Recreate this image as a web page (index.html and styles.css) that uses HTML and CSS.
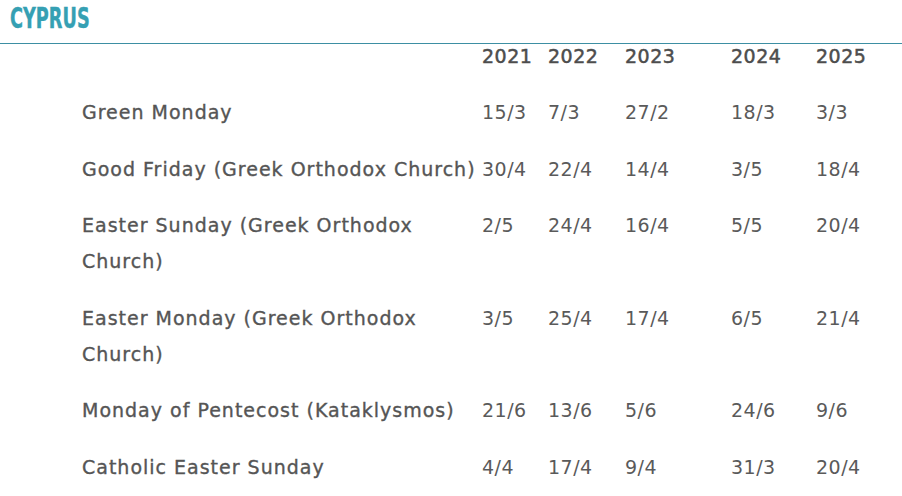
FILE: index.html
```html
<!DOCTYPE html>
<html lang="en">
<head>
<meta charset="utf-8">
<title>Cyprus</title>
<link rel="stylesheet" href="styles.css">
</head>
<body>
<header class="top">
  <h1 class="title">CYPRUS</h1>
</header>
<table class="dates">
  <colgroup>
    <col class="c-label">
    <col class="c-y1">
    <col class="c-y2">
    <col class="c-y3">
    <col class="c-y4">
    <col class="c-y5">
  </colgroup>
  <thead>
    <tr>
      <th></th><th>2021</th><th>2022</th><th>2023</th><th>2024</th><th>2025</th>
    </tr>
  </thead>
  <tbody>
    <tr><td class="lbl">Green Monday</td><td>15/3</td><td>7/3</td><td>27/2</td><td>18/3</td><td>3/3</td></tr>
    <tr><td class="lbl">Good Friday (Greek Orthodox Church)</td><td>30/4</td><td>22/4</td><td>14/4</td><td>3/5</td><td>18/4</td></tr>
    <tr><td class="lbl">Easter Sunday (Greek Orthodox Church)</td><td>2/5</td><td>24/4</td><td>16/4</td><td>5/5</td><td>20/4</td></tr>
    <tr><td class="lbl">Easter Monday (Greek Orthodox Church)</td><td>3/5</td><td>25/4</td><td>17/4</td><td>6/5</td><td>21/4</td></tr>
    <tr><td class="lbl">Monday of Pentecost (Kataklysmos)</td><td>21/6</td><td>13/6</td><td>5/6</td><td>24/6</td><td>9/6</td></tr>
    <tr><td class="lbl">Catholic Easter Sunday</td><td>4/4</td><td>17/4</td><td>9/4</td><td>31/3</td><td>20/4</td></tr>
  </tbody>
</table>
</body>
</html>
```

FILE: styles.css
```css
html, body {
  margin: 0;
  padding: 0;
  background: #fff;
}
body {
  font-family: "DejaVu Sans", sans-serif;
  color: #555;
  width: 902px;
  overflow: hidden;
}
.top {
  height: 44px;
  border-bottom: 1px solid #3d8fa3;
  box-sizing: border-box;
  padding-left: 10px;
}
.title {
  margin: 0;
  font-family: "DejaVu Sans Condensed", sans-serif;
  font-weight: bold;
  font-size: 29px;
  line-height: 36px;
  color: #35a0b3;
  display: inline-block;
  transform: scaleX(0.68);
  transform-origin: left center;
  -webkit-text-stroke: 0.4px #35a0b3;
}
.dates {
  border-collapse: collapse;
  table-layout: fixed;
  margin-left: 82px;
  width: 820px;
}
.c-label { width: 400px; }
.c-y1 { width: 66px; }
.c-y2 { width: 77px; }
.c-y3 { width: 106px; }
.c-y4 { width: 85px; }
.c-y5 { width: 86px; }
.dates th {
  text-align: left;
  vertical-align: top;
  font-weight: normal;
  font-size: 19px;
  letter-spacing: 0.5px;
  line-height: 24px;
  height: 40px;
  padding: 0;
  color: #4d4d4d;
  -webkit-text-stroke: 0.5px #4d4d4d;
}
.dates td {
  vertical-align: top;
  padding: 10px 0 10.5px;
  font-size: 19px;
  letter-spacing: 0.5px;
  line-height: 36px;
  color: #5a5a5a;
}
.dates td.lbl {
  font-size: 19px;
  letter-spacing: 1px;
  color: #555;
  padding-right: 2px;
  -webkit-text-stroke: 0.35px #555;
}
```
